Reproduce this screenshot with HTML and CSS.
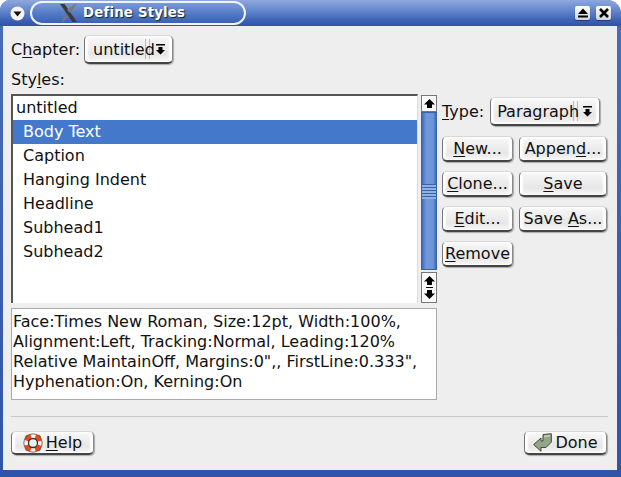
FILE: index.html
```html
<!DOCTYPE html>
<html lang="en">
<head>
<meta charset="utf-8">
<title>Define Styles</title>
<link rel="stylesheet" href="styles.css">
</head>
<body>
<div class="window">
  <header class="titlebar">
    <span class="tb-btn round"><svg width="15" height="15" viewBox="0 0 15 15"><circle cx="7.500" cy="7.500" r="7" fill="#f4f4f4"/><path d="M3.500 5.500h8L7.500 10.500z" fill="#111"/></svg></span>
    <div class="title-pill">
      <svg class="x-logo" width="17" height="18" viewBox="0 0 17 18"><path d="M0 0h4.500l12.500 18h-4.500z" fill="#3a3a38"/><path d="M15 0h1.500L10 9 7 6zM6 10.500l2 2L3 18H1z" fill="#77797a"/></svg>
      <span class="title-text">Define Styles</span>
    </div>
    <span class="tb-spacer"></span>
    <span class="tb-btn square"><svg width="12" height="12" viewBox="0 0 12 12"><path d="M6 1.500l5 5.500H1z" fill="#000"/><rect x="1" y="8.500" width="10" height="2" fill="#000"/></svg></span>
    <span class="tb-btn square"><svg width="12" height="12" viewBox="0 0 12 12"><path d="M2 2l8 8M10 2l-8 8" stroke="#000" stroke-width="2.600"/></svg></span>
  </header>
  <main class="body">
    <div class="chapter-row">
      <span class="label">C<u>h</u>apter:</span>
      <button class="btn combo chapter"><span class="combo-text">untitled</span><span class="grip"></span><svg class="combo-arrow" width="9" height="11" viewBox="0 0 9 11"><rect x="0" y="0" width="9" height="1.500" fill="#000"/><path d="M2.500 3h4v3H9L4.500 10.500 0 6h2.500z" fill="#000"/></svg></button>
    </div>
    <div class="label styles-label">Sty<u>l</u>es:</div>
    <div class="middle">
      <div class="left-col">
        <div class="list-row">
          <div class="list">
            <div class="item head">untitled</div>
            <div class="item sel">Body Text</div>
            <div class="item">Caption</div>
            <div class="item">Hanging Indent</div>
            <div class="item">Headline</div>
            <div class="item">Subhead1</div>
            <div class="item">Subhead2</div>
          </div>
          <div class="scrollbar">
            <div class="arrow-btn up"><svg width="11" height="9" viewBox="0 0 11 9"><path d="M5.500 0L11 5.500H8V9H3V5.500H0z" fill="#000"/></svg></div>
            <div class="thumb"><div class="thumb-grip"></div></div>
            <div class="arrow-btn double">
              <svg width="11" height="9" viewBox="0 0 11 9"><path d="M5.500 0L11 5.500H8V9H3V5.500H0z" fill="#000"/></svg>
              <span class="arrow-sep"></span>
              <svg width="11" height="9" viewBox="0 0 11 9"><path d="M3 0h5v3.500h3L5.500 9 0 3.500h3z" fill="#000"/></svg>
            </div>
          </div>
        </div>
        <div class="desc">Face:Times New Roman, Size:12pt, Width:100%,<br>Alignment:Left, Tracking:Normal, Leading:120%<br>Relative MaintainOff, Margins:0",, FirstLine:0.333",<br>Hyphenation:On, Kerning:On</div>
      </div>
      <aside class="right-col">
        <div class="type-row">
          <span class="label"><u>T</u>ype:</span>
          <button class="btn combo para"><span class="combo-text">Paragraph</span><span class="grip"></span><svg class="combo-arrow" width="9" height="11" viewBox="0 0 9 11"><rect x="0" y="0" width="9" height="1.500" fill="#000"/><path d="M2.500 3h4v3H9L4.500 10.500 0 6h2.500z" fill="#000"/></svg></button>
        </div>
        <div class="actions">
          <button class="btn act"><span><u>N</u>ew...</span></button>
          <button class="btn act"><span>Appen<u>d</u>...</span></button>
          <button class="btn act"><span><u>C</u>lone...</span></button>
          <button class="btn act"><span><u>S</u>ave</span></button>
          <button class="btn act"><span><u>E</u>dit...</span></button>
          <button class="btn act"><span>Save <u>A</u>s...</span></button>
          <button class="btn act"><span><u>R</u>emove</span></button>
        </div>
      </aside>
    </div>
    <hr class="sep">
    <footer class="footer">
      <button class="btn foot">
        <svg width="20" height="20" viewBox="0 0 20 20"><path d="M2.500 5L5 2.500M15 2.500L17.500 5M17.500 15L15 17.500M5 17.500L2.500 15" stroke="#666" stroke-width="2.500"/><circle cx="10" cy="10" r="7" fill="none" stroke="#f7f3ee" stroke-width="4.600"/><circle cx="10" cy="10" r="7" fill="none" stroke="#e9481a" stroke-width="4.600" stroke-dasharray="6.500 4.500" stroke-dashoffset="-2.250"/><circle cx="10" cy="10" r="9.200" fill="none" stroke="#6a4a40" stroke-width=".8"/><circle cx="10" cy="10" r="4.500" fill="#eee" stroke="#333" stroke-width="1.300"/></svg>
        <span><u>H</u>elp</span>
      </button>
      <button class="btn foot">
        <svg width="19" height="19" viewBox="0 0 19 19"><path d="M.7 11.500L8 5v3h2V1.500L18.300.7v8.500L13 14.500H8V18.300z" fill="#93a587" stroke="#3f4a38" stroke-linejoin="round"/><path d="M11 2.500l6-.7v2l-6 .7z" fill="#bccaae"/></svg>
        <span>Done</span>
      </button>
    </footer>
  </main>
</div>
</body>
</html>
```
FILE: styles.css
```css
* { box-sizing: border-box; }
html, body { margin: 0; padding: 0; }
body { width: 621px; height: 477px; background: #fff; font-family: "DejaVu Sans", sans-serif; font-size: 16px; color: #111; overflow: hidden; }
u { text-underline-offset: 2px; text-decoration-thickness: 1px; }

.window { width: 621px; height: 477px; display: flex; flex-direction: column; background: linear-gradient(#4a6cbb, #2f55a8); border-radius: 10px 14px 0 0; overflow: hidden; padding: 0 4px 7px 3px; }

.titlebar { flex: 0 0 26px; margin: 0 -4px 0 -3px; padding: 0 10px 0 9px; display: flex; align-items: center; background: linear-gradient(#8ea8dc 0, #6f8fd0 30%, #3f66b9 75%, #2e52a6 100%); }
.tb-btn { display: flex; align-items: center; justify-content: center; }
.tb-btn.round { width: 16px; height: 20px; }
.tb-btn.square { width: 15px; height: 14px; background: linear-gradient(#fff, #cfd3da); border-radius: 2px; margin-left: 6px; box-shadow: 0 1px 1px #1f3b7d; }
.title-pill { margin-left: 5px; width: 216px; height: 24px; border: 2px solid #f0f3fa; border-radius: 12px; display: flex; align-items: center; padding-left: 28px; background: linear-gradient(#7b99d8, #4e76c4 60%, #3a62b5); margin-top: -1px; }
.x-logo { flex: none; }
.title-text { margin-left: 6px; font-weight: bold; font-size: 13.300px; color: #fff; text-shadow: 1px 1px 1px #123; letter-spacing: .2px; }
.tb-spacer { flex: 1; }

.body { flex: 1; background: #eeeeee; padding: 9px 10px 0 8px; display: flex; flex-direction: column; min-height: 0; }

.label { line-height: 20px; }
.chapter-row { display: flex; align-items: center; gap: 4px; height: 29px; }
.styles-label { margin-top: 6px; height: 24px; line-height: 20px; }

.btn { font: inherit; color: #111; padding: 0; border: 1px solid #d8d8d8; border-right-color: #888; border-left-color: #777; border-bottom: 2px solid #444; border-radius: 5px; background: linear-gradient(#fdfdfd 0, #f4f4f4 15%, #e6e6e6 70%, #f8f8f8 100%); box-shadow: inset 3px 0 2px #fff, inset -3px 0 2px #fff, 1px 1px 1px #aaa; cursor: default; }
.combo { display: flex; align-items: center; position: relative; height: 29px; padding-left: 8px; }
.chapter { width: 89px; }
.para { width: 110px; padding-left: 6px; }
.grip { position: absolute; top: 3px; bottom: 3px; width: 5px; border-left: 1px solid #bbb; border-right: 1px solid #bbb; }
.chapter .grip { left: 60px; }
.para .grip { left: 82px; }
.combo-text { position: relative; z-index: 1; }
.combo-arrow { position: absolute; right: 7px; top: 8px; }

.middle { display: flex; gap: 5px; }
.left-col { width: 426px; display: flex; flex-direction: column; gap: 5px; }
.list-row { display: flex; height: 209px; gap: 3px; }
.list { width: 408px; background: #fff; border: 2px solid #555; border-right: 1px solid #ddd; border-bottom: 0; overflow: hidden; }
.item { height: 24px; line-height: 24px; padding-left: 10px; white-space: nowrap; }
.item.head { padding-left: 3px; }
.item.sel { background: #4478ca; color: #fff; }
.scrollbar { width: 16px; margin-top: 1px; display: flex; flex-direction: column; }
.arrow-btn { background: #fafafa; border: 1px solid #777; display: flex; flex-direction: column; align-items: center; justify-content: center; }
.arrow-btn.up { height: 17px; }
.arrow-btn.double { height: 31px; margin-top: 2px; gap: 2px; }
.arrow-sep { width: 7px; height: 1px; background: #000; }
.thumb { flex: 1; background: linear-gradient(90deg, #3f69b3, #7099dc 30%, #6b95d8 80%, #3f69b3); border: 1px solid #3a62a8; display: flex; align-items: center; }
.thumb-grip { width: 100%; height: 15px; background: repeating-linear-gradient(#3a62a8 0 1px, #90b0e4 1px 3px); }

.desc { height: 92px; background: #fff; border: 1px solid #aaa; padding: 3px 1px; line-height: 20px; white-space: nowrap; }

.right-col { flex: 1; display: flex; flex-direction: column; }
.type-row { display: flex; align-items: center; gap: 6px; height: 29px; margin-top: 3px; }
.actions { display: grid; grid-template-columns: 71px 88px; column-gap: 6px; row-gap: 9px; margin-top: 10px; grid-auto-rows: 26px; }
.act { display: flex; align-items: center; justify-content: center; white-space: nowrap; }

.sep { width: 597px; height: 1px; margin: 16px 0 0 0; border: 0; background: #c8c8c8; flex: none; }
.footer { display: flex; justify-content: space-between; margin-top: 14px; width: 596px; }
.foot { display: flex; align-items: center; justify-content: center; gap: 3px; width: 83px; height: 24px; }
```
